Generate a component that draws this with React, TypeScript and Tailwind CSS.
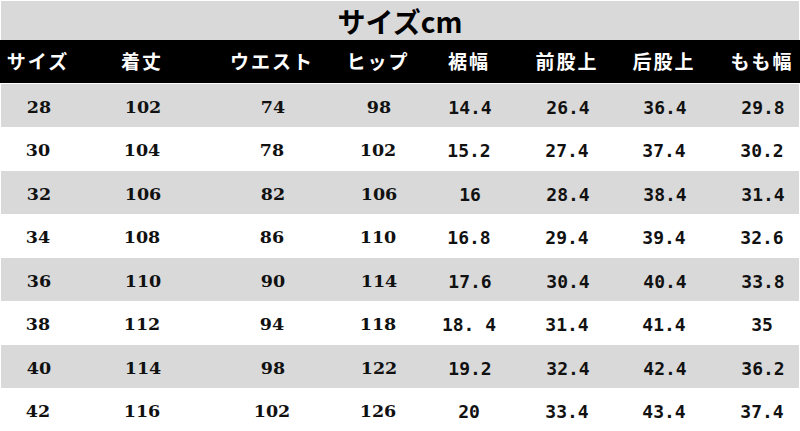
const headers = ["サイズ", "着丈", "ウエスト", "ヒップ", "裾幅", "前股上", "后股上", "もも幅"];

const rows = [
  ["28", "102", "74", "98", "14.4", "26.4", "36.4", "29.8"],
  ["30", "104", "78", "102", "15.2", "27.4", "37.4", "30.2"],
  ["32", "106", "82", "106", "16", "28.4", "38.4", "31.4"],
  ["34", "108", "86", "110", "16.8", "29.4", "39.4", "32.6"],
  ["36", "110", "90", "114", "17.6", "30.4", "40.4", "33.8"],
  ["38", "112", "94", "118", "18. 4", "31.4", "41.4", "35"],
  ["40", "114", "98", "122", "19.2", "32.4", "42.4", "36.2"],
  ["42", "116", "102", "126", "20", "33.4", "43.4", "37.4"],
];

const cols = "grid grid-cols-[76px_132px_128px_84px_98px_98px_96px_88px]";

export default function App() {
  return (
    <div className="w-[800px] h-[431px] bg-white overflow-hidden flex flex-col">
      {/* Title */}
      <div className="mt-px mx-px h-[40px] bg-[#d9d9d9] flex items-center justify-center">
        <span className="text-[28px] font-bold text-black leading-none font-['Noto_Sans_CJK_JP',sans-serif]">
          サイズcm
        </span>
      </div>

      {/* Header */}
      <div className={`${cols} h-[44px] bg-black items-center text-white text-[19px] font-bold font-['Noto_Sans_CJK_JP',sans-serif]`}>
        {headers.map((h, i) => (
          <div key={h} className={`text-center whitespace-nowrap tracking-[2px] ${i === 7 ? "pl-3" : ""}`}>
            {h}
          </div>
        ))}
      </div>

      {/* Body */}
      <div className="flex flex-col">
        {rows.map((r, ri) => (
          <div
            key={r[0]}
            className={`${cols} h-[43px] items-center text-[#111] ${
              ri % 2 === 0 ? "bg-[#d9d9d9] mt-px mx-px" : "bg-white"
            }`}
          >
            {r.map((v, i) => (
              <div
                key={i}
                className={`text-center whitespace-pre pt-[3px] ${i === 7 ? "pl-3" : ""} ${
                  i < 4
                    ? "font-['DejaVu_Serif',serif] font-bold text-[17.5px]"
                    : "font-['DejaVu_Sans_Mono',monospace] font-bold text-[18px]"
                }`}
              >
                {v}
              </div>
            ))}
          </div>
        ))}
      </div>
    </div>
  );
}
